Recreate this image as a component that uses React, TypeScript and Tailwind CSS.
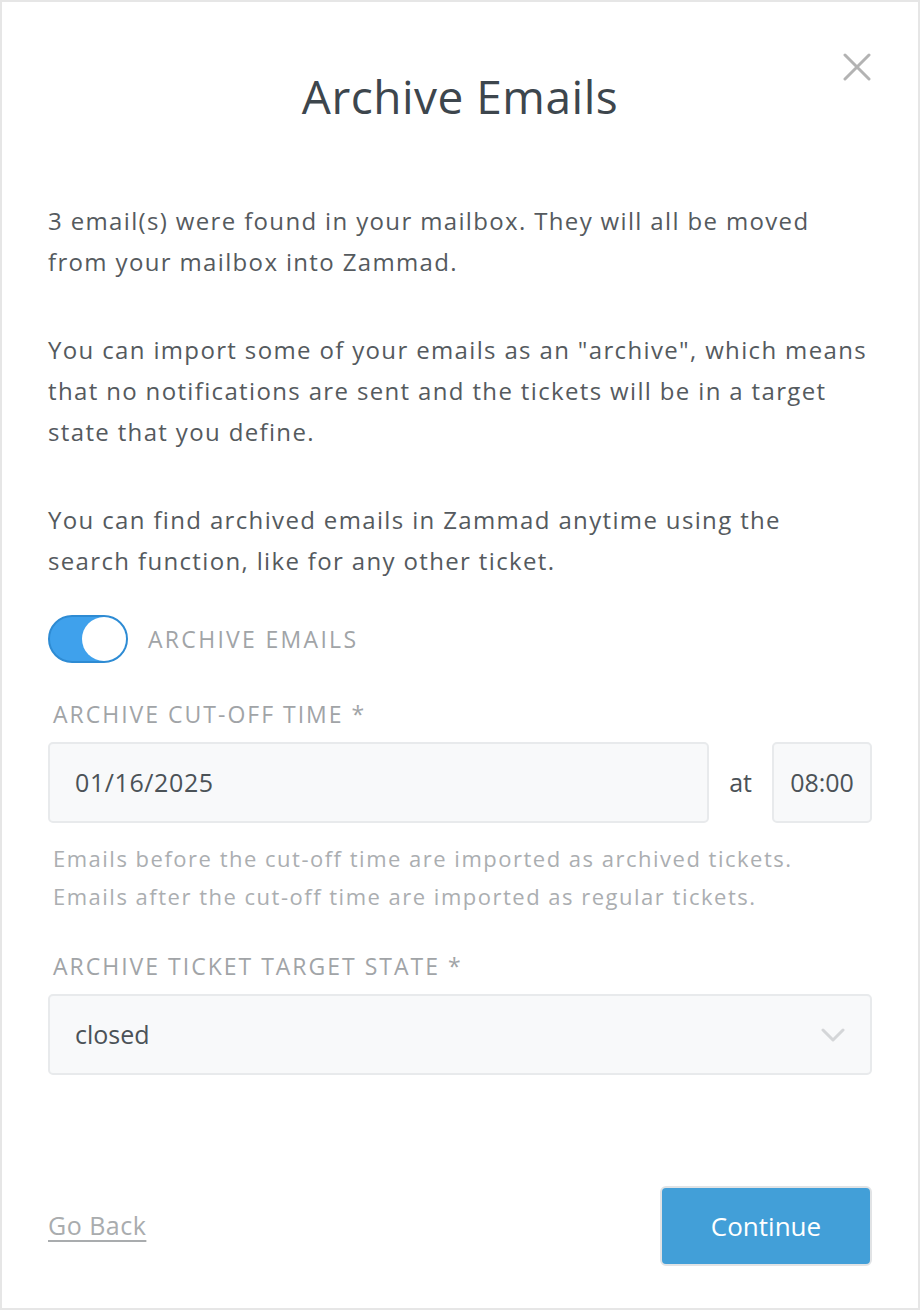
import React from "react";

export default function App() {
  const font = { fontFamily: '"Open Sans", "Noto Sans", sans-serif' };
  return (
    <div className="w-[920px] h-[1310px] bg-white border-2 border-[#e6e6e6] relative" style={font}>
      <button className="absolute right-[46px] top-[50px] w-[30px] h-[30px] flex items-center justify-center">
        <svg width="28" height="28" viewBox="0 0 28 28" fill="none">
          <path d="M2 2 L26 26 M26 2 L2 26" stroke="#b3b3b3" strokeWidth="3" strokeLinecap="round" />
        </svg>
      </button>
      <div className="flex flex-col px-[46px] pt-[66px]">
        <h1 className="text-center text-[46px] leading-[56px] text-[#3d464d] tracking-[0.5px]">Archive Emails</h1>
        <div className="mt-[76px] text-[24px] leading-[41px] tracking-[1.35px] text-[#555a5e] flex flex-col gap-[47px]">
          <p>3 email(s) were found in your mailbox. They will all be moved <br />from your mailbox into Zammad.</p>
          <p>You can import some of your emails as an "archive", which means <br />that no notifications are sent and the tickets will be in a target <br />state that you define.</p>
          <p>You can find archived emails in Zammad anytime using the <br />search function, like for any other ticket.</p>
        </div>
        <div className="mt-[34px] flex items-center gap-[20px]">
          <div className="w-[80px] h-[48px] rounded-full bg-[#3fa1ec] border-2 border-[#2e8bd3] relative">
            <div className="absolute right-0 top-0 w-[44px] h-[44px] rounded-full bg-white" />
          </div>
          <span className="text-[23px] tracking-[2.3px] text-[#a1a4a7]">ARCHIVE EMAILS</span>
        </div>
        <div className="mt-[36px] pl-[5px] text-[23px] tracking-[2px] text-[#a1a4a7] leading-[30px]">ARCHIVE CUT-OFF TIME *</div>
        <div className="mt-[13px] flex items-center gap-[20px]">
          <div className="flex-1 h-[81px] rounded-[5px] bg-[#f8f9fa] border-2 border-[#e8eaec] flex items-center px-[25px] text-[25px] tracking-[0.6px] text-[#4b5257]">01/16/2025</div>
          <span className="text-[25px] text-[#4b5257]">at</span>
          <div className="w-[100px] h-[81px] rounded-[5px] bg-[#f8f9fa] border-2 border-[#e8eaec] flex items-center justify-center text-[25px] text-[#4b5257]">08:00</div>
        </div>
        <div className="mt-[16px] pl-[5px] text-[22px] leading-[38px] tracking-[1.5px] text-[#abaeb1]">
          <p>Emails before the cut-off time are imported as archived tickets.</p>
          <p>Emails after the cut-off time are imported as regular tickets.</p>
        </div>
        <div className="mt-[36px] pl-[5px] text-[23px] tracking-[2px] text-[#a1a4a7] leading-[30px]">ARCHIVE TICKET TARGET STATE *</div>
        <div className="mt-[13px] h-[81px] rounded-[5px] bg-[#f8f9fa] border-2 border-[#e8eaec] flex items-center justify-between px-[25px] text-[25px] text-[#4b5257]">
          <span>closed</span>
          <svg width="24" height="14" viewBox="0 0 24 14" fill="none">
            <path d="M2 2 L12 12 L22 2" stroke="#d4d6d8" strokeWidth="3" strokeLinecap="round" strokeLinejoin="round" />
          </svg>
        </div>
        <div className="mt-[111px] flex items-center justify-between">
          <a className="text-[25px] tracking-[0.5px] text-[#a9acae] underline underline-offset-[5px] decoration-[2px]">Go Back</a>
          <button className="w-[212px] h-[80px] rounded-[6px] bg-[#429fd8] border-2 border-[#e1e3e5] text-white text-[26px]">Continue</button>
        </div>
      </div>
    </div>
  );
}
